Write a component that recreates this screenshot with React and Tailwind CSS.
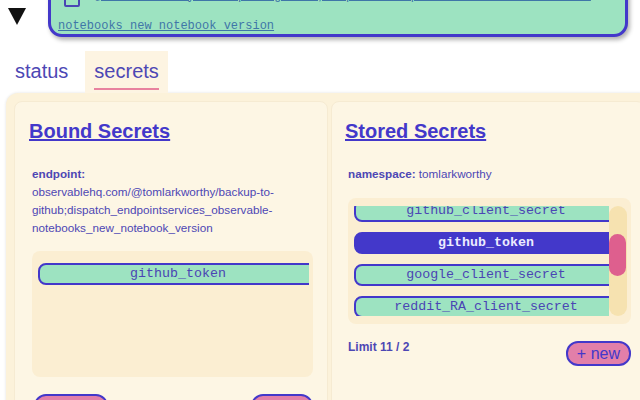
import React from 'react';

const boundSecrets = ['github_token'];

const storedSecrets = [
    'airtable_api_key',
    'discord_bot_token',
    'github_client_secret',
    'github_token',
    'google_client_secret',
    'reddit_RA_client_secret',
    'slack_webhook',
    'stripe_secret_key',
    'twitter_bearer_token',
];

const SecretItem = ({ name, selected }) => (
    <div
        className={`h-[22px] w-[calc(100%+9px)] shrink-0 rounded-lg border-2 border-[#4338ca] flex items-center justify-center font-['Liberation_Mono',monospace] text-[13.3px] leading-none ${
            selected ? 'bg-[#4338ca] text-[#ecebff] font-bold' : 'bg-[#9de3c1] text-[#4a45b4]'
        }`}
    >
        {name}
    </div>
);

const PinkButton = ({ children, className = '' }) => (
    <button className={`h-[25px] rounded-xl border-2 border-[#4338ca] bg-[#e27fa9] px-[9px] text-[16px] leading-none text-[#4338ca] ${className}`}>
        {children}
    </button>
);

const App = () => {
    return (
        <div className="h-[400px] w-[640px] overflow-hidden bg-white font-['Liberation_Sans',Arial,sans-serif] text-[#4d47b4]">
            {/* header (page scrolled, top is cut) */}
            <div className="flex items-start -mt-[20px]">
                <div className="pl-2 mt-[28px] w-[48px] shrink-0">
                    <svg width="18" height="17" viewBox="0 0 18 17">
                        <polygon points="0,0 18,0 9,17" fill="#111" />
                    </svg>
                </div>
                <div className="mr-3 flex-1 rounded-[14px] border-[3px] border-[#4338ca] bg-[#9de3c1] pl-[7px] pr-4 pt-[6px] shadow-[2px_3px_4px_rgba(0,0,0,0.3)] font-['Liberation_Mono',monospace] text-[12px] text-[#3f76a8]">
                    <div className="flex h-[20px] items-center gap-[14px] pl-[6px]">
                        <span className="h-[16px] w-[16px] shrink-0 rounded-[2px] border-2 border-[#4a45b4]"></span>
                        <a className="-mt-[7px] underline leading-[20px] whitespace-nowrap">@tomlarkworthy/backup-to-github;dispatch_endpointservices_observable-</a>
                    </div>
                    <a className="mt-[9px] block underline leading-[16px]">notebooks_new_notebook_version</a>
                </div>
            </div>

            {/* tabs */}
            <div className="mt-[14px] flex gap-2 pl-[6px]">
                <div className="px-[9px] pt-[6px] pb-[8px] text-[20px] leading-[28px]">status</div>
                <div className="bg-[#fdf4e2] px-[9px] pt-[6px] pb-[3px]">
                    <div className="text-[20px] leading-[28px]">secrets</div>
                    <div className="mt-[3px] h-[2px] bg-[#e8829f]"></div>
                </div>
            </div>

            {/* panel */}
            <div className="ml-[6px] w-[647px] shrink-0 rounded-xl bg-[#fcf2da] p-2 shadow-[0_0_3px_rgba(0,0,0,0.12)]">
                <div className="flex gap-[3px]">
                    {/* Bound Secrets */}
                    <div className="h-[320px] w-[314px] shrink-0 rounded-lg border border-[#f6ebd2] bg-[#fdf6e4] px-[14px] pt-[15px]">
                        <h2 className="text-[20px] leading-[28px] font-bold underline text-[#4338ca]">Bound Secrets</h2>
                        <div className="pl-[3px]">
                            <div className="mt-[20px] text-[11.7px] leading-[18px]">
                                <div className="font-bold">endpoint:</div>
                                <div>
                                    observablehq.com/@tomlarkworthy/backup-to-
                                    <br />
                                    github;dispatch_endpointservices_observable-
                                    <br />
                                    notebooks_new_notebook_version
                                </div>
                            </div>
                            <div className="mt-[14px] h-[126px] rounded-lg bg-[#fbeed2] py-[7px] pl-[6px] pr-[4px]">
                                <div className="flex h-full flex-col gap-[10px] overflow-hidden py-[5px]">
                                    {boundSecrets.map((s) => (
                                        <SecretItem key={s} name={s} />
                                    ))}
                                </div>
                            </div>
                            <div className="mt-[17px] flex justify-between pl-[2px]">
                                <PinkButton className="w-[74px]">unbind</PinkButton>
                                <PinkButton className="w-[62px]">bind</PinkButton>
                            </div>
                        </div>
                    </div>

                    {/* Stored Secrets */}
                    <div className="h-[320px] w-[314px] shrink-0 rounded-lg border border-[#f6ebd2] bg-[#fdf6e4] px-[13px] pt-[15px]">
                        <h2 className="text-[20px] leading-[28px] font-bold underline text-[#4338ca]">Stored Secrets</h2>
                        <div className="pl-[3px]">
                            <div className="mt-[20px] text-[11.7px] leading-[18px]">
                                <span className="font-bold">namespace:</span> tomlarkworthy
                            </div>
                            <div className="mt-[15px] flex h-[126px] rounded-lg bg-[#fbeed2] py-[8px] pl-[6px] pr-[4px]">
                                <div className="h-full flex-1 overflow-hidden">
                                    <div className="-mt-[75px] flex flex-col gap-[10px] py-[5px]">
                                        {storedSecrets.map((s) => (
                                            <SecretItem key={s} name={s} selected={s === 'github_token'} />
                                        ))}
                                    </div>
                                </div>
                                {/* scrollbar */}
                                <div className="h-full w-[18px] shrink-0 rounded-full bg-[#f6e2b0]">
                                    <div className="mt-[28px] h-[42px] w-[17px] rounded-full bg-[#de5f8e]"></div>
                                </div>
                            </div>
                            <div className="mt-[14px] flex items-start justify-between">
                                <div className="text-[12px] leading-[18px] font-bold">Limit 11 / 2</div>
                                <div className="mt-[3px]">
                                    <PinkButton>+ new</PinkButton>
                                </div>
                            </div>
                        </div>
                    </div>
                </div>
            </div>
        </div>
    );
};

export default App;
